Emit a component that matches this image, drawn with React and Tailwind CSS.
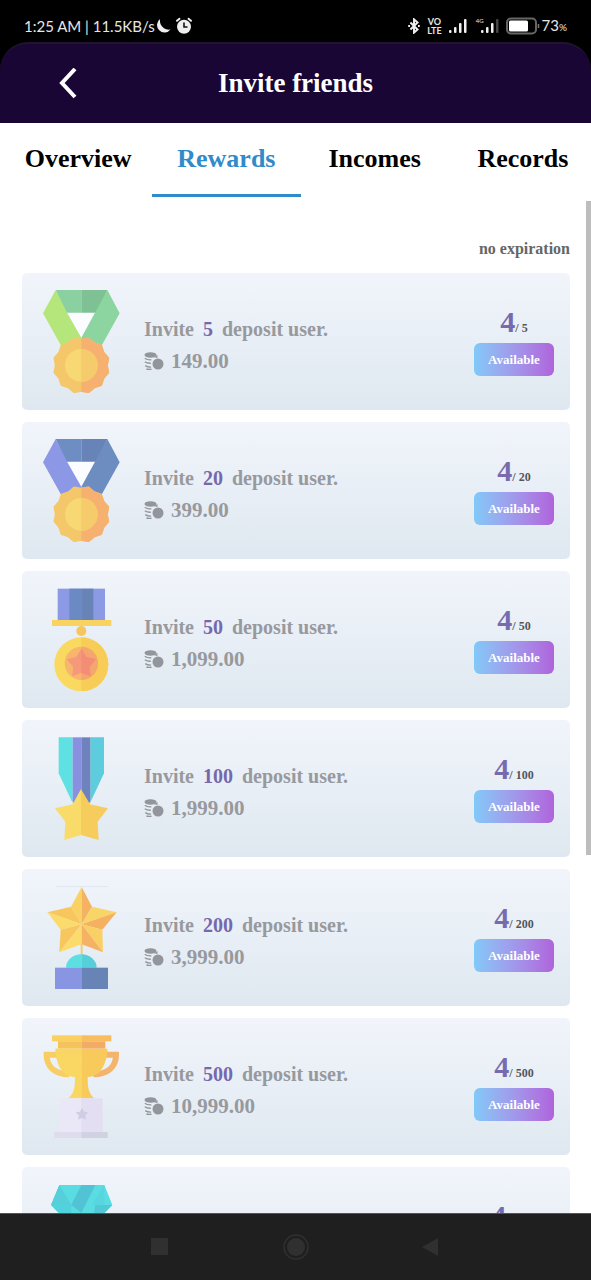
import React, { useState } from "react";
import clsx from "clsx";

const tabs = ["Overview", "Rewards", "Incomes", "Records"];

const rewards = [
    { target: 5, amount: "149.00", icon: GreenMedal },
    { target: 20, amount: "399.00", icon: BlueMedal },
    { target: 50, amount: "1,099.00", icon: PinMedal },
    { target: 100, amount: "1,999.00", icon: StarRibbon },
    { target: 200, amount: "3,999.00", icon: StarTrophy },
    { target: 500, amount: "10,999.00", icon: CupTrophy },
    { target: 1000, icon: DiamondTrophy },
];

// points of a star polygon, turn is in radians from straight up
function starPoints(cx, cy, count, outer, inner, turn = 0) {
    return Array.from({ length: count * 2 }, (_, i) => {
        const r = i % 2 === 0 ? outer : inner;
        const a = (Math.PI * i) / count - Math.PI / 2 + turn;
        return `${(cx + r * Math.cos(a)).toFixed(1)},${(cy + r * Math.sin(a)).toFixed(1)}`;
    }).join(" ");
}

function Award({ children }) {
    return (
        <svg viewBox="0 0 240 312" className="h-[104px] w-20 shrink-0" aria-hidden="true">
            {children}
        </svg>
    );
}

function NeckMedal({ id, left, right, top, topDark }) {
    const scallop = starPoints(118, 229, 12, 84, 77, Math.PI / 12);

    return (
        <Award>
            <clipPath id={id}>
                <rect x="118" y="130" width="122" height="182" />
            </clipPath>
            <polygon points="75,68 162,68 118,150" fill="#fafcff" />
            <polygon points="41,3 118,3 118,71 72,71" fill={top} />
            <polygon points="118,3 196,3 165,71 118,71" fill={topDark} />
            <polygon points="41,3 3,73 59,173 118,160 118,146 75,71" fill={left} />
            <polygon points="196,3 233,73 177,173 118,160 118,146 159,71" fill={right} />
            <polygon points={scallop} fill="#f5c76b" stroke="#f5c76b" strokeWidth="5" strokeLinejoin="round" />
            <polygon
                points={scallop}
                fill="#f6b170"
                stroke="#f6b170"
                strokeWidth="5"
                strokeLinejoin="round"
                clipPath={`url(#${id})`}
            />
            <circle cx="118" cy="229" r="49" fill="#f7d873" />
            <path d="M118 180a49 49 0 0 1 0 98z" fill="#f5cb6b" />
        </Award>
    );
}

function GreenMedal() {
    return <NeckMedal id="green-medal" left="#b5e67c" right="#8cd5a0" top="#8bd0a0" topDark="#7fc195" />;
}

function BlueMedal() {
    return <NeckMedal id="blue-medal" left="#8c98e6" right="#6d8dc0" top="#6e8dc2" topDark="#6883b8" />;
}

function PinMedal() {
    return (
        <Award>
            <rect x="47" y="5" width="142" height="94" fill="#8c99e5" />
            <rect x="82" y="5" width="36" height="94" fill="#6b89c2" />
            <rect x="118" y="5" width="36" height="94" fill="#6883b6" />
            <rect x="30" y="99" width="178" height="18" fill="#f9d35f" />
            <circle cx="118" cy="132" r="15" fill="#f6c65c" />
            <circle cx="118" cy="232" r="81" fill="#f9d95f" />
            <path d="M118 151a81 81 0 0 1 0 162z" fill="#f7cd57" />
            <circle cx="118" cy="229" r="50" fill="#f7b66c" />
            <path d="M118 179a50 50 0 0 1 0 100z" fill="#f5a56e" />
            <polygon points={starPoints(118, 231, 5, 46, 26)} fill="#f6987a" />
            <polygon points="118,185 133,210 162,217 143,239 145,268 118,257" fill="#f38d76" />
        </Award>
    );
}

function StarRibbon() {
    return (
        <Award>
            <polygon points="50,4 92,4 92,195 89,195 50,112" fill="#5fe1e4" />
            <polygon points="145,4 186,4 186,112 147,195 145,195" fill="#5dccdc" />
            <rect x="92" y="4" width="26" height="196" fill="#8990df" />
            <rect x="118" y="4" width="27" height="196" fill="#6e83be" />
            <polygon points="117,159 92,205 39,217 70,257 67,312 117,297" fill="#f8db68" />
            <polygon points="117,159 144,205 198,217 167,257 170,312 117,297" fill="#f6cd5c" />
        </Award>
    );
}

function StarTrophy() {
    return (
        <Award>
            <rect x="42" y="4" width="156" height="2" fill="#dce2ec" />
            <polygon points="119,6 87,65 119,118" fill="#fad264" />
            <polygon points="119,6 150,65 119,118" fill="#f6b263" />
            <polygon points="87,65 16,82 119,118" fill="#f7c75d" />
            <polygon points="16,82 56,134 119,118" fill="#fbdb6c" />
            <polygon points="150,65 224,82 119,118" fill="#f9d466" />
            <polygon points="224,82 181,134 119,118" fill="#f5b160" />
            <polygon points="56,134 52,202 119,118" fill="#f7c75d" />
            <polygon points="52,202 119,178 119,118" fill="#fbdb6c" />
            <polygon points="181,134 183,202 119,118" fill="#f9d064" />
            <polygon points="183,202 119,178 119,118" fill="#f6b263" />
            <rect x="116" y="176" width="6" height="34" fill="#f7c977" />
            <path d="M72 248a46 40 0 0 1 46-40v40z" fill="#5cdfe0" />
            <path d="M118 208a46 40 0 0 1 46 40h-46z" fill="#57cfd8" />
            <rect x="39" y="248" width="79" height="64" fill="#8795e3" />
            <rect x="118" y="248" width="80" height="64" fill="#6883b5" />
        </Award>
    );
}

function CupTrophy() {
    return (
        <Award>
            <path d="M52 62H14C14 98 39 120 82 121" fill="none" stroke="#f8cd63" strokeWidth="18" />
            <path d="M184 62h38c0 36-25 58-68 59" fill="none" stroke="#f4b46c" strokeWidth="18" />
            <path d="M40 53h78v140H79c17-15 20-30 20-64C70 128 45 104 40 53z" fill="#fad663" />
            <path d="M118 53h78c-5 51-30 75-59 76 0 34 3 49 20 64h-39z" fill="#f8ca5c" />
            <path d="M30 4h88v18H30z" fill="#fad160" />
            <path d="M118 4h90v18h-90z" fill="#f7bd5e" />
            <path d="M48 22h70v22H48z" fill="#f6c25c" />
            <path d="M118 22h72v22h-72z" fill="#f3ac66" />
            <path d="M40 44h78v12H40z" fill="#fad663" />
            <path d="M118 44h78v12h-78z" fill="#f8ca5c" />
            <rect x="53" y="193" width="65" height="101" fill="#eae7f6" />
            <rect x="118" y="193" width="64" height="101" fill="#e3def1" />
            <rect x="37" y="294" width="81" height="18" fill="#dedced" />
            <rect x="118" y="294" width="79" height="18" fill="#d0d1e1" />
            <polygon points={starPoints(120, 241, 5, 20, 10)} fill="#d0cce3" />
        </Award>
    );
}

function DiamondTrophy() {
    return (
        <Award>
            <polygon points="52,6 187,6 211,66 119,160 27,66" fill="#59dce2" />
            <polygon points="52,6 88,66 27,66" fill="#55cfd9" />
            <polygon points="118,6 160,6 118,90 88,66" fill="#51c3d5" />
            <polygon points="187,6 187,66 150,66" fill="#57d6df" />
            <polygon points="160,66 211,66 150,128" fill="#51c8d6" />
            <polygon points="27,66 88,66 88,128" fill="#50d3dc" />
            <rect x="60" y="248" width="118" height="64" fill="#8795e3" />
        </Award>
    );
}

function CoinsIcon() {
    return (
        <svg viewBox="0 0 20 18" className="h-[18px] w-5" fill="#92959b" aria-hidden="true">
            <ellipse cx="6.500" cy="3" rx="6" ry="2.700" />
            <circle cx="14" cy="12" r="5.500" />
            <path
                d="M.8 6.200c1.800 1.400 4 1.800 6.500 1.600M.8 9.800c1.600 1.200 3.400 1.600 6 1.500M1.300 13.600c1.500 1.200 3.300 1.600 5.800 1.500M2.500 17c1.300.5 3 .6 5 .3"
                fill="none"
                stroke="#92959b"
                strokeWidth="1.400"
            />
            <path d="M10 5.200l3.500-2.200v3z" />
        </svg>
    );
}

function SignalIcon({ weak }) {
    return (
        <svg viewBox="0 0 20 18" className="h-[18px] w-5" aria-hidden="true">
            <g fill="#f1f1f1">
                <rect x="1" y="13" width="2.500" height="3" rx="1" />
                <rect x="6" y="10" width="2.500" height="6" rx="1" />
                <rect x="11" y="6" width="2.500" height="10" rx="1" />
                <rect x="16" y="2" width="2.500" height="14" rx="1" fill={weak ? "#444" : "#f1f1f1"} />
            </g>
        </svg>
    );
}

function StatusBar() {
    return (
        <div className="flex h-[42px] shrink-0 items-center justify-between pt-2.5 pr-6 pl-6 font-['Lato','Noto_Sans',sans-serif] text-[#e6e6e6]">
            <div className="flex items-center">
                <span className="text-[15px] leading-5">1:25 AM | 11.5KB/s</span>
                <svg viewBox="0 0 16 16" className="size-4" aria-hidden="true">
                    <path d="M5 1A7.500 7.500 0 1 0 15.500 11.500C10 12.500 4 8 5 1z" fill="#efefef" />
                </svg>
                <svg viewBox="0 0 18 18" className="ml-1 size-[18px]" aria-hidden="true">
                    <circle cx="9" cy="9.700" r="7" fill="#efefef" />
                    <path d="M2 3.800L4.500 1.800M16 3.800L13.500 1.800" stroke="#efefef" strokeWidth="2" strokeLinecap="round" />
                    <path d="M9 5.500v4.500h3.500" fill="none" stroke="#111" strokeWidth="1.600" />
                </svg>
            </div>
            <div className="flex items-center">
                <svg viewBox="0 0 14 18" className="mr-1.5 h-4 w-3.5" fill="none" stroke="#efefef" strokeWidth="2.200" aria-hidden="true">
                    <path d="M3 5l8 8-4 3.500V1.500L11 5l-8 8" />
                    <path d="M.5 9h2M11.500 9h2" />
                </svg>
                <span className="mr-1.5 text-center text-[9px] leading-[9px] font-bold">
                    VO
                    <br />
                    LTE
                </span>
                <SignalIcon />
                <span className="ml-2 flex">
                    <span className="-mr-1 text-[6px] leading-[8px]">4G</span>
                    <SignalIcon weak />
                </span>
                <svg viewBox="0 0 34 18" className="ml-1.5 h-[18px] w-[34px]" aria-hidden="true">
                    <rect x="1" y="1.500" width="29" height="15" rx="4" fill="none" stroke="#666" strokeWidth="2" />
                    <rect x="3" y="3.500" width="19" height="11" rx="1.500" fill="#fff" />
                    <path d="M32.500 7v4" stroke="#777" strokeWidth="1.500" />
                </svg>
                <span className="ml-0.5 text-[15px] leading-5">
                    73<span className="text-[10px]">%</span>
                </span>
            </div>
        </div>
    );
}

function RewardCard({ target, amount, icon: Icon }) {
    return (
        <li className="flex h-[137px] shrink-0 items-start rounded-[5px] bg-linear-to-b from-[#f1f5fb] to-[#dfe8f0] pt-4 pr-4 pl-5">
            <Icon />
            <div className="ml-[22px] flex-1 pt-7 text-[20px] leading-6 font-bold text-[#97999e]">
                {amount && (
                    <>
                        <p>
                            Invite <span className="mx-1 text-[#7568ad]">{target}</span> deposit user.
                        </p>
                        <p className="mt-2 flex items-center gap-[7px] text-[21px]">
                            <CoinsIcon />
                            {amount}
                        </p>
                    </>
                )}
            </div>
            <div className="flex w-20 flex-col items-center pt-4 font-bold">
                <p className="h-[34px] leading-[34px] text-[#54555c]">
                    <span className="text-[30px] text-[#776bb0]">4</span>
                    <span className="text-[12px]">/ {target}</span>
                </p>
                {amount && (
                    <button className="mt-1 h-[33px] w-full rounded-md bg-linear-to-r from-[#80c9f8] to-[#af63dc] text-[13px] text-white">
                        Available
                    </button>
                )}
            </div>
        </li>
    );
}

function App() {
    const [activeTab, setActiveTab] = useState("Rewards");

    return (
        <div className="flex h-screen flex-col overflow-hidden bg-black font-['Liberation_Serif',serif]">
            <StatusBar />
            <header className="grid h-[81px] shrink-0 grid-cols-[1fr_auto_1fr] items-center rounded-t-[28px] border-t-2 border-[#20142f] bg-[#190634] text-white">
                <button aria-label="Back" className="ml-14 w-6">
                    <svg viewBox="0 0 24 32" className="h-8 w-6" fill="none" stroke="#fff" strokeWidth="4" aria-hidden="true">
                        <path d="M19 1L6 15l13 14" />
                    </svg>
                </button>
                <h1 className="text-[27px] font-bold">Invite friends</h1>
            </header>

            <div className="relative flex min-h-0 flex-1 flex-col overflow-hidden bg-white">
                <nav className="-mr-1.5 ml-1 grid shrink-0 grid-cols-4">
                    {tabs.map((tab) => (
                        <button
                            key={tab}
                            onClick={() => setActiveTab(tab)}
                            className={clsx(
                                "h-[74px] border-b-3 text-[26px] font-bold",
                                tab === activeTab ? "border-[#2f8bc9] text-[#2f8bc9]" : "border-transparent text-black"
                            )}
                        >
                            {tab}
                        </button>
                    ))}
                </nav>
                <main className="min-h-0 flex-1 overflow-hidden pr-[21px] pl-[22px]">
                    <p className="mt-10 text-right text-[16px] leading-6 font-bold text-[#666]">no expiration</p>
                    <ul className="mt-3 flex flex-col gap-3">
                        {rewards.map((item) => (
                            <RewardCard key={item.target} {...item} />
                        ))}
                    </ul>
                </main>
                {/* scroll thumb */}
                <div className="absolute top-[78px] right-0 h-3/5 w-[5px] bg-[#bdbdbd]" />
            </div>

            <footer className="flex h-[67px] shrink-0 items-center justify-center gap-[107px] border-t border-[#555] bg-[#1f1f1f]">
                <button aria-label="Recent apps">
                    <svg viewBox="0 0 28 28" className="size-7" aria-hidden="true">
                        <rect x="4" y="5" width="17" height="17" fill="#303030" />
                    </svg>
                </button>
                <button aria-label="Home">
                    <svg viewBox="0 0 28 28" className="size-7" aria-hidden="true">
                        <circle cx="14" cy="14" r="12" fill="none" stroke="#303030" strokeWidth="1.500" />
                        <circle cx="14" cy="14" r="9" fill="#303030" />
                    </svg>
                </button>
                <button aria-label="Go back">
                    <svg viewBox="0 0 28 28" className="size-7" aria-hidden="true">
                        <path d="M21 5v18L5 14z" fill="#303030" />
                    </svg>
                </button>
            </footer>
        </div>
    );
}

export default App;
